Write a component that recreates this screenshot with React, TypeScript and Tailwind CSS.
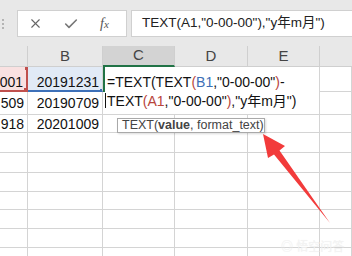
import { Check, X } from 'lucide-react';

const font = { fontFamily: '"Liberation Sans", "Noto Sans CJK SC", sans-serif' };

const rowHeights = 'grid-rows-[21px_25px_23px_18px_20px_20px_19px_18px_19px_19px_19px]';
const cols = 'grid-cols-[28px_75px_72px_73px_72px_1fr]';

const cell = 'border-r border-b border-[#d4d4d4] bg-white';
const num = 'flex items-end justify-end pr-[3px] leading-[16px] text-[14px] text-[#111] overflow-hidden whitespace-nowrap';

const Paren = ({ c }: { c: string }) => <span className="text-[#b8453c]">{c}</span>;

export default function App() {
  return (
    <div className="relative w-[352px] h-[256px] overflow-hidden bg-white" style={font}>
      {/* formula bar */}
      <div className="h-[46px] bg-[#e8e8e8] flex items-start pt-[10px]">
        <div className="w-[17px] h-[27px] flex flex-col items-start justify-center gap-[2px] pl-[2px]">
          <div className="w-[2px] h-[2px] bg-[#b4b4b4]" />
          <div className="w-[2px] h-[2px] bg-[#b4b4b4]" />
          <div className="w-[2px] h-[2px] bg-[#b4b4b4]" />
        </div>
        <div className="w-[110px] h-[27px] bg-white border border-[#d0d0d0] flex items-center text-[#666]">
          <X size={15} strokeWidth={1.8} className="ml-[10px]" />
          <Check size={16} strokeWidth={2.4} className="ml-[20px] text-[#777]" />
          <span className="ml-[21px] text-[14px] italic text-[#555]" style={{ fontFamily: '"Liberation Serif", serif' }}>
            f<span className="text-[11px]">x</span>
          </span>
        </div>
        <div className="ml-[4px] flex-1 h-[27px] bg-white border border-[#d0d0d0] border-r-0 flex items-center pl-[10px] text-[13.5px] text-[#222] whitespace-nowrap">
          TEXT(A1,"0-00-00"),"y年m月")
        </div>
      </div>

      {/* sheet */}
      <div className={`grid ${cols} ${rowHeights}`}>
        {/* header */}
        <div className="bg-[#e8e8e8] border-r border-b border-[#cfcfcf]" />
        <div className="bg-[#e8e8e8] border-r border-b border-[#cfcfcf] flex items-center justify-center text-[15px] text-[#444]">B</div>
        <div className="bg-[#d3d3d3] border-r border-[#cfcfcf] border-b-2 border-b-[#217346] flex items-center justify-center text-[15px] text-[#444]">C</div>
        <div className="bg-[#e8e8e8] border-r border-b border-[#cfcfcf] flex items-center justify-center text-[15px] text-[#444]">D</div>
        <div className="bg-[#e8e8e8] border-r border-b border-[#cfcfcf] flex items-center justify-center text-[15px] text-[#444]">E</div>
        <div className="bg-[#e8e8e8] border-b border-[#cfcfcf]" />

        {/* row 1 */}
        <div className={`relative bg-[#f9e1e1] border-r-2 border-b-2 border-[#c0504d] ${num} pb-[0px]`}>
          001
          <div className="absolute right-[-3px] top-0 w-[4px] h-[3px] bg-[#c0504d]" />
          <div className="absolute right-[-4px] bottom-[-4px] w-[6px] h-[6px] bg-[#c0504d]" />
        </div>
        <div className={`relative bg-[#e1eaf6] border-r border-[#d4d4d4] border-b-2 border-b-[#3d70b8] ${num} pb-[0px]`}>
          20191231
          <div className="absolute right-[-3px] bottom-[-4px] w-[5px] h-[5px] bg-[#3d70b8]" />
        </div>
        <div className="relative col-span-3 row-span-2 bg-white border-r border-b border-[#d4d4d4] pt-[6px] pl-[4px] text-[14px] leading-[19px] text-[#111] whitespace-nowrap">
          <div className="absolute left-0 top-0 w-[2px] h-[25px] bg-[#217346]" />
          <div>
            =TEXT(TEXT<Paren c="(" /><span className="text-[#3d6fb6]">B1</span>,"0-00-00"<Paren c=")" />-
          </div>
          <div className="relative">
            <div className="absolute left-[-2px] top-[1px] w-px h-[15px] bg-[#111]" />
            TEXT<Paren c="(" /><span className="text-[#b8453c]">A1</span>,"0-00-00"<Paren c=")" />,"y年m月")
          </div>
        </div>
        <div className={cell} />

        {/* row 2 */}
        <div className={`${cell} ${num} pb-[3.5px]`}>509</div>
        <div className={`${cell} ${num} pb-[3.5px]`}>20190709</div>
        <div className={cell} />

        {/* row 3 */}
        <div className={`${cell} ${num} pb-0`}>918</div>
        <div className={`${cell} ${num} pb-0`}>20201009</div>
        <div className={cell} />
        <div className={cell} />
        <div className={cell} />
        <div className={cell} />

        {Array.from({ length: 7 * 6 }).map((_, i) => (
          <div key={i} className={cell} />
        ))}
      </div>

      {/* function tooltip */}
      <div className="absolute left-[117px] top-[118px] w-[148px] h-[15px] bg-white border border-[#a9a9a9] shadow-[1px_1px_2px_rgba(0,0,0,0.15)] pl-[4px] text-[12.5px] leading-[13px] text-[#444] whitespace-nowrap">
        TEXT(<span className="font-bold">value</span>, format_text)
      </div>

      {/* arrow */}
      <svg className="absolute inset-0 pointer-events-none" width="352" height="256" viewBox="0 0 352 256">
        <polygon
          points="263,134 285,146 279.5,150.5 330,223 274,154.5 268,158"
          fill="#f23b3b"
        />
      </svg>

      {/* watermark */}
      <div className="absolute left-[281px] top-[238px] text-[12px] text-[#f3f3f3] whitespace-nowrap" style={{ textShadow: '0 0 1px rgba(0,0,0,0.06)' }}>
        ◎ 悟空问答
      </div>
    </div>
  );
}
